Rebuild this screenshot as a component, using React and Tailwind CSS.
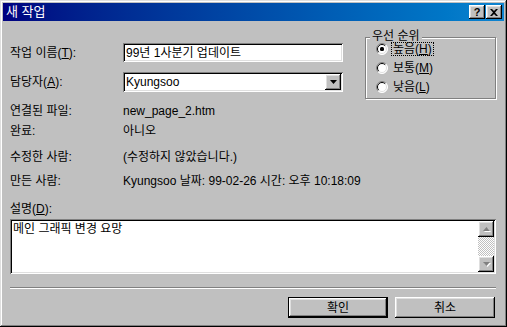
import React from "react";

const raised =
  "shadow-[inset_-1px_-1px_#000,inset_1px_1px_#fff,inset_-2px_-2px_#808080,inset_2px_2px_#dfdfdf]";
const sunken =
  "shadow-[inset_1px_1px_#808080,inset_-1px_-1px_#fff,inset_2px_2px_#000,inset_-2px_-2px_#dfdfdf]";

const Key = ({ children }) => <span className="underline underline-offset-[1px]">{children}</span>;

const Radio = ({ checked }) => (
  <svg width="12" height="12" viewBox="0 0 12 12" className="shrink-0">
    <circle cx="6" cy="6" r="5.5" fill="#fff" />
    <path d="M2.1 9.9 A5.5 5.5 0 0 1 9.9 2.1" stroke="#808080" fill="none" />
    <path d="M9.9 2.1 A5.5 5.5 0 0 1 2.1 9.9" stroke="#fff" fill="none" />
    <path d="M2.8 9.2 A4.5 4.5 0 0 1 9.2 2.8" stroke="#000" fill="none" />
    <path d="M9.2 2.8 A4.5 4.5 0 0 1 2.8 9.2" stroke="#dfdfdf" fill="none" />
    {checked && <rect x="4" y="4" width="4" height="4" rx="1.5" fill="#000" />}
  </svg>
);

const Arrow = ({ up, color = "#000" }) => (
  <svg width="7" height="4" viewBox="0 0 7 4">
    <path d={up ? "M3.5 0 L7 4 L0 4 Z" : "M0 0 L7 0 L3.5 4 Z"} fill={color} />
  </svg>
);

const ScrollBtn = ({ up }) => (
  <div className={`w-[16px] h-[16px] bg-[#c0c0c0] flex items-center justify-center ${raised}`}>
    <div className="relative">
      <div className="absolute left-[1px] top-[1px]">
        <Arrow up={up} color="#fff" />
      </div>
      <div className="relative flex">
        <Arrow up={up} color="#808080" />
      </div>
    </div>
  </div>
);

const InfoRow = ({ label, value, className }) => (
  <div className={`flex h-[14px] leading-[14px] ${className}`}>
    <div className="w-[113px]">{label}</div>
    <div className="whitespace-nowrap">{value}</div>
  </div>
);

export default function App() {
  return (
    <div
      className={`w-[507px] h-[327px] bg-[#c0c0c0] p-[3px] flex flex-col text-[12px] leading-[14px] text-black font-['Liberation_Sans','Noto_Sans_CJK_KR',sans-serif] shadow-[inset_-1px_-1px_#000,inset_1px_1px_#dfdfdf,inset_-2px_-2px_#808080,inset_2px_2px_#fff]`}
    >
      {/* title bar */}
      <div className="h-[18px] flex items-center bg-gradient-to-r from-[#000080] to-[#1084d0] pl-[3px] pr-[2px]">
        <span className="text-white text-[13px]">새 작업</span>
        <div className="ml-auto flex gap-[1px]">
          <div className={`w-[16px] h-[14px] bg-[#c0c0c0] flex items-center justify-center font-bold text-[11px] leading-none ${raised}`}>
            ?
          </div>
          <div className={`w-[16px] h-[14px] bg-[#c0c0c0] flex items-center justify-center ${raised}`}>
            <svg width="8" height="7" viewBox="0 0 8 7">
              <path d="M0 0h2l2 2 2-2h2L5 3.5 8 7H6L4 5 2 7H0l3-3.5z" fill="#000" />
            </svg>
          </div>
        </div>
      </div>

      {/* body */}
      <div className="flex-1 flex flex-col pl-[7px] pr-[8px]">
        <div className="flex mt-[9px]">
          <div className="flex flex-col pt-[13px]">
            <div className="flex items-center h-[19px]">
              <div className="w-[113px]">
                작업 이름(<Key>T</Key>):
              </div>
              <div className={`w-[220px] h-[19px] bg-white pl-[3px] flex items-center ${sunken}`}>
                99년 1사분기 업데이트
              </div>
            </div>
            <div className="flex items-center h-[20px] mt-[10px]">
              <div className="w-[113px]">
                담당자(<Key>A</Key>):
              </div>
              <div className={`w-[220px] h-[20px] bg-white pl-[3px] pr-[2px] flex items-center ${sunken}`}>
                <span>Kyungsoo</span>
                <div className={`ml-auto w-[16px] h-[16px] bg-[#c0c0c0] flex items-center justify-center ${raised}`}>
                  <Arrow />
                </div>
              </div>
            </div>
          </div>

          <div className="ml-auto w-[131px] mt-[7px] h-[62px] relative border border-[#808080] shadow-[1px_1px_#fff,inset_1px_1px_#fff] pt-[1px] pl-[10px]">
            <span className="absolute -top-[8px] left-[4px] px-[2px] bg-[#c0c0c0] leading-[12px]">우선 순위</span>
            <div className="flex items-center gap-[4px] h-[19px]">
              <Radio checked />
              <span className="outline outline-1 outline-dotted outline-black px-[1px] leading-[12px]">
                높음(<Key>H</Key>)
              </span>
            </div>
            <div className="flex items-center gap-[4px] h-[19px]">
              <Radio />
              <span className="px-[1px] leading-[12px]">
                보통(<Key>M</Key>)
              </span>
            </div>
            <div className="flex items-center gap-[4px] h-[19px]">
              <Radio />
              <span className="px-[1px] leading-[12px]">
                낮음(<Key>L</Key>)
              </span>
            </div>
          </div>
        </div>

        <InfoRow className="mt-[5px]" label="연결된 파일:" value="new_page_2.htm" />
        <InfoRow className="mt-[6px]" label="완료:" value="아니오" />
        <InfoRow className="mt-[12px]" label="수정한 사람:" value="(수정하지 않았습니다.)" />
        <InfoRow className="mt-[10px]" label="만든 사람:" value="Kyungsoo 날짜: 99-02-26 시간: 오후 10:18:09" />

        <div className="mt-[14px] h-[14px]">
          설명(<Key>D</Key>):
        </div>
        <div className={`mt-[3px] h-[55px] bg-white flex p-[2px] ${sunken}`}>
          <div className="flex-1 pl-[1px] pt-[1px]">메인 그래픽 변경 요망</div>
          <div className="w-[16px] flex flex-col">
            <ScrollBtn up />
            <div className="flex-1 bg-[image:repeating-conic-gradient(#c0c0c0_0%_25%,#fff_0%_50%)] bg-[length:2px_2px]" />
            <ScrollBtn />
          </div>
        </div>

        <div className="mt-[13px] h-[2px] border-t border-[#808080] border-b border-b-white" />

        <div className="mt-[8px] flex justify-end gap-[7px] pr-[1px]">
          <div className="w-[100px] h-[21px] bg-black p-[1px]">
            <div className={`h-full bg-[#c0c0c0] flex items-center justify-center ${raised}`}>확인</div>
          </div>
          <div className={`w-[100px] h-[21px] bg-[#c0c0c0] flex items-center justify-center ${raised}`}>취소</div>
        </div>
      </div>
    </div>
  );
}
